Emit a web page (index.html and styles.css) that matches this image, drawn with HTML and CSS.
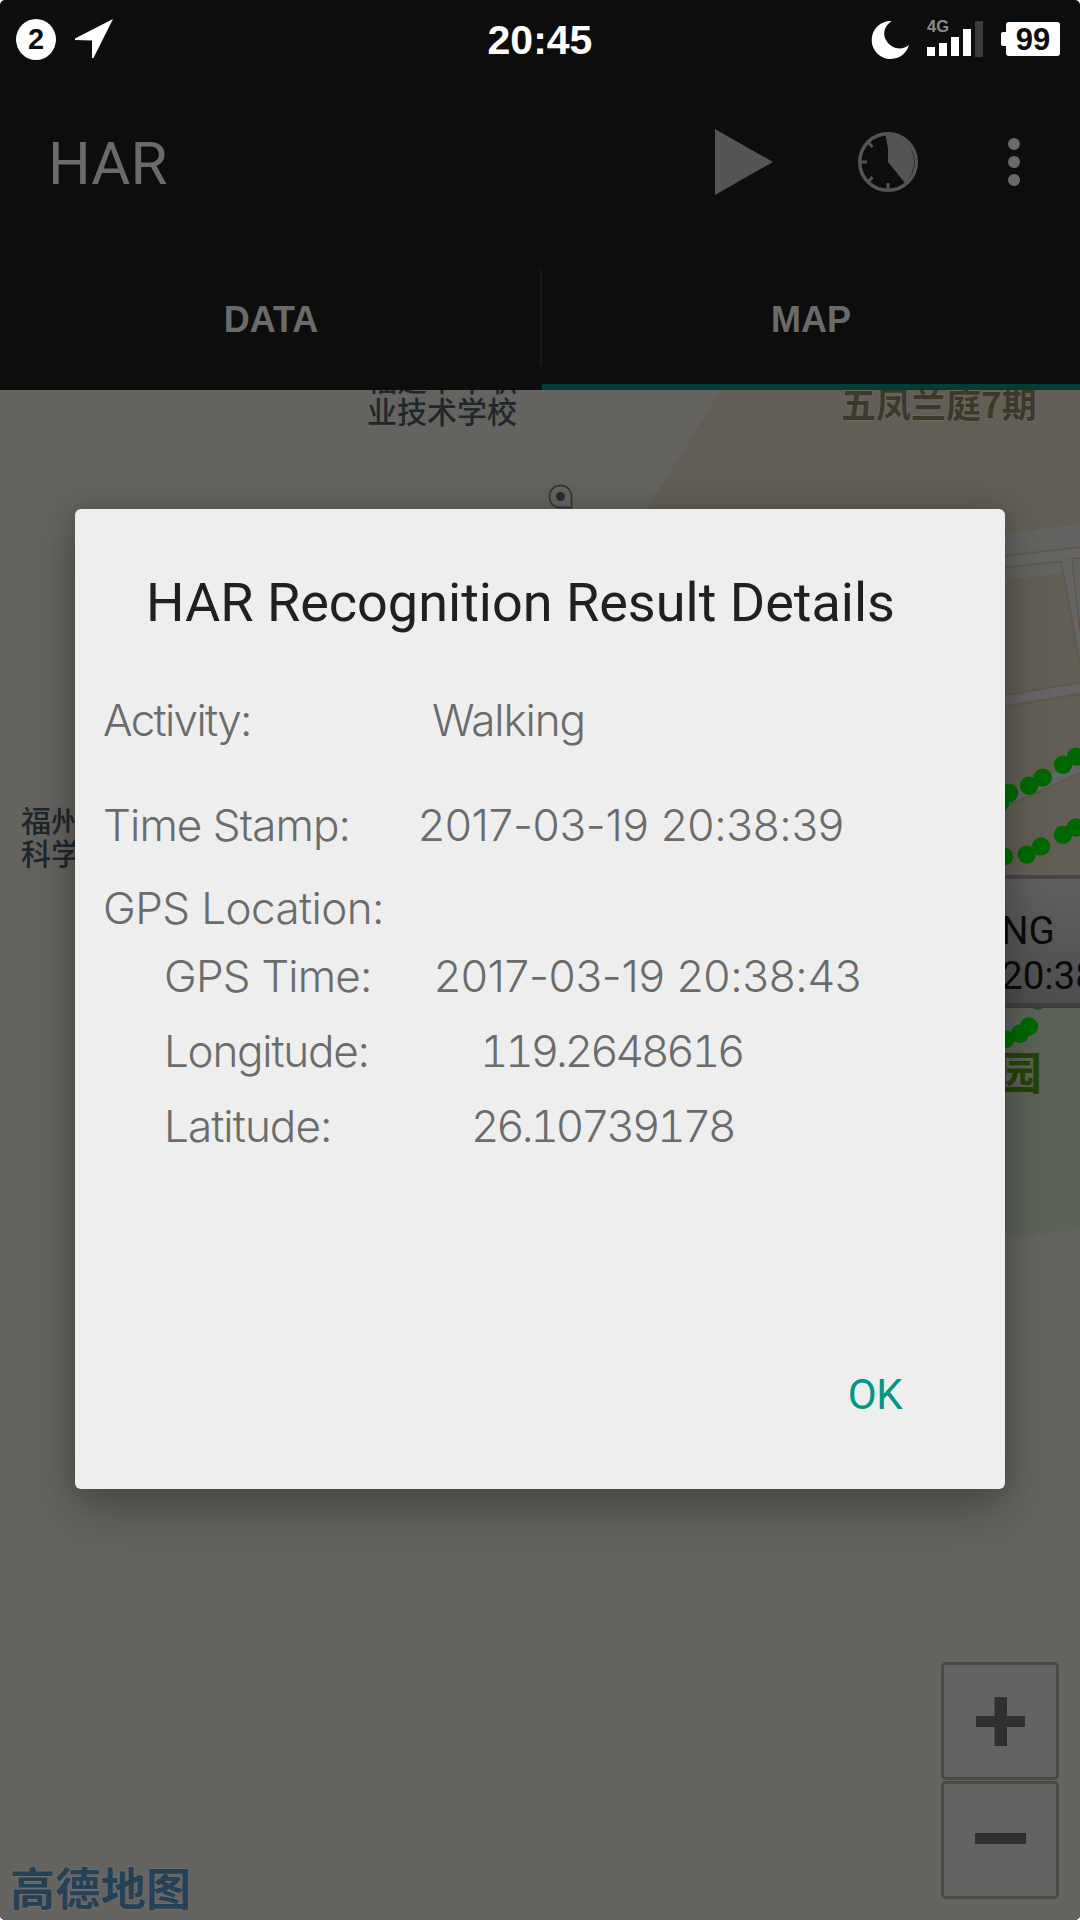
FILE: index.html
```
<!DOCTYPE html>
<html lang="en">
<head>
<meta charset="utf-8">
<title>HAR</title>
<link rel="stylesheet" href="styles.css">
</head>
<body>
<div class="screen">
  <header class="status-bar">
    <div class="status-left">
      <span class="count">2</span>
      <svg class="arrow" width="38" height="39" viewBox="0 0 38 39"><path d="M38 0L18.500 39H17V21.500L0 21V19.500z" fill="#fff"/></svg>
    </div>
    <div class="clock">20:45</div>
    <div class="status-right">
      <svg class="signal" width="112" height="40" viewBox="0 0 112 40">
        <path d="M20.500 1A19 19 0 1 0 38 25C31 31 20 29 15 20C11 13 14 6 20.500 1z" fill="#fff"/>
        <g fill="#fff"><rect x="56" y="27" width="8" height="9"/><rect x="68" y="23" width="8" height="13"/><rect x="80" y="17" width="8" height="19"/><rect x="92" y="9" width="8" height="27"/></g>
        <rect x="104" y="1" width="8" height="36" fill="#3c3c3c"/>
        <text x="56" y="12" class="network">4G</text>
      </svg>
      <div class="battery">99</div>
    </div>
  </header>

  <div class="app-bar">
    <h1 class="app-title">HAR</h1>
    <div class="actions">
      <svg width="60" height="70" viewBox="0 0 60 70"><path d="M1 2L59 35L1 68z" fill="#545454"/></svg>
      <svg class="timer" width="62" height="62" viewBox="0 0 62 62">
        <circle cx="31" cy="31" r="28.300" fill="none" stroke="#545454" stroke-width="3.500"/>
        <path d="M31 31V18L28.500 3L31 1.500A29.500 29.500 0 0 1 48 52z" fill="#545454"/>
        <g stroke="#545454" stroke-width="3"><path d="M31 59V52M3 31H10M11.500 11.500L15.500 16M11.500 50.500L15.500 46"/></g>
      </svg>
      <svg class="more" width="12" height="50" viewBox="0 0 12 50" fill="#6a6a6a"><circle cx="6" cy="7" r="6"/><circle cx="6" cy="25" r="6"/><circle cx="6" cy="43" r="6"/></svg>
    </div>
  </div>

  <nav class="tabs">
    <div class="tab">DATA</div>
    <div class="tab tab-active">MAP</div>
  </nav>

  <main class="map">
    <svg class="map-canvas" width="1080" height="1530" viewBox="0 390 1080 1530">
      <defs>
        <linearGradient id="bubble" x1="0" y1="0" x2="0" y2="1"><stop offset="0" stop-color="#606060"/><stop offset="1" stop-color="#4d4d4d"/></linearGradient>
      </defs>
      <path d="M721 390H1080V524L1000 535.500V600H605L648 508z" fill="#615e56"/>
      <path d="M990 535L1080 524.500V569L1066 573L990 582z" fill="#636361"/>
      <path d="M990 582L1066 573L1080 640V880H990z" fill="#615e56"/>
      <g fill="none" stroke="#656565" stroke-width="9">
        <path d="M990 563L1080 553M990 703L1080 688"/>
        <path d="M1067 560L1086 662" stroke-width="11"/>
        <path d="M990 805L1080 768" stroke-width="12"/>
      </g>
      <g fill="none" stroke="#625549" stroke-width="1.500">
        <path d="M990 558L1080 547M990 569L1061 561.500L1065 582L1080 663M1080 630L1072 558.500L1080 558"/>
        <path d="M990 698L1080 682.500M990 709L1080 694M1000 809L1080 773"/>
      </g>
      <path d="M990 1005H1080V1229.500L990 1238.500z" fill="#5d6259"/>
      <g fill="#006800">
        <circle cx="1038" cy="1001" r="9" fill="#1f5529"/>
        <circle cx="1000" cy="803" r="9.200"/><circle cx="1009" cy="793" r="9.200"/><circle cx="1029" cy="785.700" r="9.200"/><circle cx="1042.700" cy="777.600" r="9.200"/><circle cx="1063" cy="764.800" r="9.200"/><circle cx="1076" cy="756.600" r="9.200"/>
        <circle cx="1004" cy="856.600" r="9.200"/><circle cx="1026.700" cy="854.600" r="9.200"/><circle cx="1041" cy="846.400" r="9.200"/><circle cx="1063" cy="834.700" r="9.200"/><circle cx="1076" cy="827.500" r="9.200"/>
        <circle cx="1005" cy="1039.300" r="9.200"/><circle cx="1020" cy="1033.700" r="9.200"/><circle cx="1029" cy="1026.500" r="9.200"/>
      </g>
      <rect x="980" y="876" width="110" height="131" fill="url(#bubble)"/>
      <path d="M980 877H1080" stroke="#474747" stroke-width="4"/>
      <path d="M980 1005.500H1080" stroke="#3f3f41" stroke-width="5"/>
      <path d="M549.500 495A10.500 10.500 0 0 1 560 485.500H562A10.500 10.500 0 0 1 571.500 495V507.500H559A10 10 0 0 1 549.500 498z" fill="#656463" stroke="#3c3631" stroke-width="1.800"/>
      <circle cx="560.500" cy="496.500" r="4.500" fill="#252f38"/>
      <text x="1001" y="944" class="bubble-text">NG</text>
      <text x="1001" y="989" class="bubble-text">20:38</text>
      <text x="367" y="391" class="poi">福建中华职</text>
      <text x="367" y="423" class="poi">业技术学校</text>
      <text x="21" y="832" class="poi">福州</text>
      <text x="21" y="865" class="poi">科学</text>
      <text x="841" y="417.500" class="estate">五凤兰庭7期</text>
      <text x="997" y="1090" class="park">园</text>
      <text x="10" y="1906" class="brand" textLength="181">高德地图</text>
    </svg>
    <div class="zoom">
      <div class="zoom-button"><svg width="52" height="50" viewBox="0 0 52 50"><path d="M2 20H20.500V1H33V20H51V31H33V50H20.500V31H2z" fill="#303030"/></svg></div>
      <div class="zoom-button"><svg width="52" height="50" viewBox="0 0 52 50"><path d="M1 18H52V29H1z" fill="#303030"/></svg></div>
    </div>
  </main>

  <section class="dialog">
    <h2 class="dialog-title">HAR Recognition Result Details</h2>
    <div class="row activity"><span class="label">Activity:</span><span class="value">Walking</span></div>
    <div class="row stamp"><span class="label">Time Stamp:</span><span class="value date">2017-03-19 20:38:39</span></div>
    <div class="row location"><span class="label">GPS Location:</span></div>
    <div class="row nested gps-time"><span class="label">GPS Time:</span><span class="value date">2017-03-19 20:38:43</span></div>
    <div class="row nested longitude"><span class="label">Longitude:</span><span class="value coord">119.2648616</span></div>
    <div class="row nested latitude"><span class="label">Latitude:</span><span class="value coord">26.10739178</span></div>
    <div class="dialog-actions"><span class="ok">OK</span></div>
  </section>
</div>
</body>
</html>
```
FILE: styles.css
```
* { box-sizing: border-box; }
body { margin: 0; background: #fff; font-family: "Liberation Sans", Arial, sans-serif; }
svg { display: block; }
.screen { position: relative; width: 1080px; height: 1920px; overflow: hidden; border-radius: 5px; background: #0d0d0d; display: flex; flex-direction: column; }

.status-bar { flex: none; height: 78px; padding: 19px 20px 0 16px; display: grid; grid-template-columns: 1fr auto 1fr; align-items: start; color: #fff; border-bottom: 2px solid #0a0a0a; }
.status-left { display: flex; gap: 19px; }
.count { width: 40px; height: 41px; border-radius: 50%; background: #fff; color: #0d0d0d; font-weight: bold; font-size: 29px; line-height: 40px; text-align: center; }
.clock { font-weight: bold; font-size: 41px; line-height: 43px; padding-left: 4px; }
.status-right { display: flex; justify-content: flex-end; gap: 23px; padding-top: 1px; }
.signal { overflow: visible; }
.network { font-size: 16.5px; font-weight: bold; fill: #8a8a8a; }
.battery { position: relative; width: 54px; height: 34px; margin-top: 2px; border-radius: 3px; background: #fff; color: #0d0d0d; font-weight: bold; font-size: 31px; line-height: 35px; text-align: center; }
.battery::before { content: ""; position: absolute; left: -5px; top: 10px; width: 6px; height: 14px; border-radius: 2px 0 0 2px; background: #fff; }

.app-bar { flex: none; height: 168px; padding: 0 60px 0 48px; display: flex; justify-content: space-between; align-items: center; }
.app-title { margin: 4px 0 0; font: 400 60px/70px Roboto, sans-serif; color: #6a6a6a; }
.actions { display: flex; align-items: center; }
.timer { margin-left: 83px; }
.more { margin-left: 89px; }

.tabs { flex: none; height: 144px; display: grid; grid-template-columns: 542px 538px; font-weight: bold; font-size: 36px; line-height: 42px; text-align: center; color: #6a6a6a; }
.tab { padding-top: 53px; border-bottom: 6px solid transparent; background: linear-gradient(#191919, #191919) no-repeat 100% 24px / 2px 96px; }
.tab-active { background: none; border-bottom-color: #003d36; }

.map { position: relative; flex: 1; min-height: 0; background: #65635f; }
.map-canvas text { font-family: "Noto Sans CJK SC", sans-serif; }
.map-canvas .poi { font-size: 30px; font-weight: 500; fill: #1f272d; }
.map-canvas .estate { font-size: 35px; font-weight: 700; fill: #3d3929; stroke: #696662; stroke-width: 2px; paint-order: stroke; }
.map-canvas .park { font-size: 45px; font-weight: 700; fill: #244408; }
.map-canvas .brand { font-size: 45px; font-weight: 700; fill: #254155; stroke: #6c6d6c; stroke-width: 2px; paint-order: stroke; }
.map-canvas .bubble-text { font: 400 38.5px Roboto, sans-serif; fill: #0b0b0b; }
.zoom { position: absolute; right: 21px; bottom: 21px; display: grid; gap: 1px; }
.zoom-button { width: 118px; height: 118px; display: grid; place-items: center; background: #636361; border: 3px solid #494947; border-radius: 5px; }

.dialog { position: absolute; left: 75px; top: 509px; width: 930px; height: 980px; padding: 60px 30px; border-radius: 6px; background: #eee; box-shadow: 0 24px 48px rgba(0,0,0,.22), 0 0 30px rgba(0,0,0,.18); color: #6b6b6b; font: 320 44px/60px Inter, sans-serif; }
.dialog-title { margin: 0 0 53px 41px; font: 400 54px/68px Roboto, sans-serif; color: #202020; white-space: nowrap; }
.row { display: flex; height: 60px; white-space: nowrap; margin-top: 15px; }
.nested { padding-left: 60px; }
.label { width: 320px; margin-left: -2px; }
.nested .label { width: 270px; margin-left: -1px; }
.activity .label { letter-spacing: -1.7px; width: 329px; }
.activity .value { letter-spacing: -1.1px; }
.stamp { margin-top: 45px; }
.stamp .label { letter-spacing: -.93px; width: 315px; }
.location { margin-top: 23px; letter-spacing: -.58px; }
.gps-time { margin-top: 8px; }
.gps-time .label { letter-spacing: -.83px; }
.longitude .label { letter-spacing: -1.24px; width: 316px; }
.latitude .label { letter-spacing: -.93px; width: 307px; }
.date { letter-spacing: -.3px; }
.coord { letter-spacing: -3.1px; font-variant-numeric: tabular-nums; }
.dialog-actions { display: flex; justify-content: flex-end; padding: 209px 73px 0 0; }
.ok { font: 400 42px/60px Roboto, sans-serif; letter-spacing: -.5px; color: #009688; }
```
